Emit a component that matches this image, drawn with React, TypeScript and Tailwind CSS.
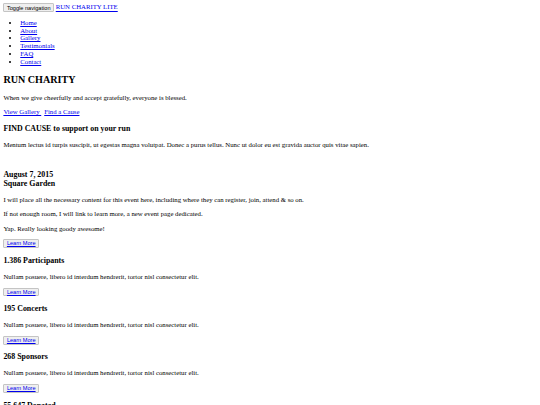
import React from "react";

const linkCls = "text-[#0000ee] underline";
const pCls = "my-[1em]";
const h3Cls = "text-[7.9px] font-bold my-[1em] leading-[1.15]";
const btnCls =
  "inline-block bg-[#efefef] border border-[#c4c4c4] rounded-[1px] px-[2.5px] py-[0.2px] text-[5.625px] leading-[1.15] font-['Liberation_Sans',Arial,sans-serif] text-black align-baseline";

function LearnMore() {
  return (
    <div>
      <button className={btnCls}>
        <a className={linkCls}>Learn More</a>
      </button>
    </div>
  );
}

export default function App() {
  const navItems = ["Home", "About", "Gallery", "Testimonials", "FAQ", "Contact"];
  const stats = [
    "1.386 Participants",
    "195 Concerts",
    "268 Sponsors",
  ];
  return (
    <div className="min-h-[405px] bg-white text-black p-[3.375px] text-[6.75px] leading-[1.15] font-['Liberation_Serif','Times_New_Roman',serif]">
      <nav>
        <div>
          <button className={btnCls}>Toggle navigation</button>{" "}
          <a className={linkCls}>RUN CHARITY LITE</a>
        </div>
        <ul className="list-disc my-[1em] pl-[16.875px]">
          {navItems.map((n) => (
            <li key={n}>
              <a className={linkCls}>{n}</a>
            </li>
          ))}
        </ul>
      </nav>
      <h2 className="text-[10.125px] font-bold my-[0.83em] leading-[1.15]">RUN CHARITY</h2>
      <p className={pCls}>When we give cheerfully and accept gratefully, everyone is blessed.</p>
      <p className={pCls}>
        <a className={linkCls}>{"View Gallery\u00a0"}</a>
        <span className="inline-block w-[3px]"></span>
        <a className={linkCls}>Find a Cause</a>
      </p>
      <h3 className={h3Cls}>FIND CAUSE to support on your run</h3>
      <p className={pCls}>
        Mentum lectus id turpis suscipit, ut egestas magna volutpat. Donec a purus tellus. Nunc ut dolor eu est gravida auctor quis vitae sapien.
      </p>
      <h3 className="text-[7.9px] font-bold mt-[21px] mb-[1em] leading-[1.15]">
        August 7, 2015
        <br />
        Square Garden
      </h3>
      <p className={pCls}>
        I will place all the necessary content for this event here, including where they can register, join, attend &amp; so on.
      </p>
      <p className={pCls}>If not enough room, I will link to learn more, a new event page dedicated.</p>
      <p className={pCls}>Yap. Really looking goody awesome!</p>
      <LearnMore />
      {stats.map((s) => (
        <div key={s}>
          <h3 className={h3Cls}>{s}</h3>
          <p className={pCls}>Nullam posuere, libero id interdum hendrerit, tortor nisl consectetur elit.</p>
          <LearnMore />
        </div>
      ))}
      <h3 className={h3Cls}>55.647 Donated</h3>
      <p className={pCls}>Nullam posuere, libero id interdum hendrerit, tortor nisl consectetur elit.</p>
      <LearnMore />
    </div>
  );
}
